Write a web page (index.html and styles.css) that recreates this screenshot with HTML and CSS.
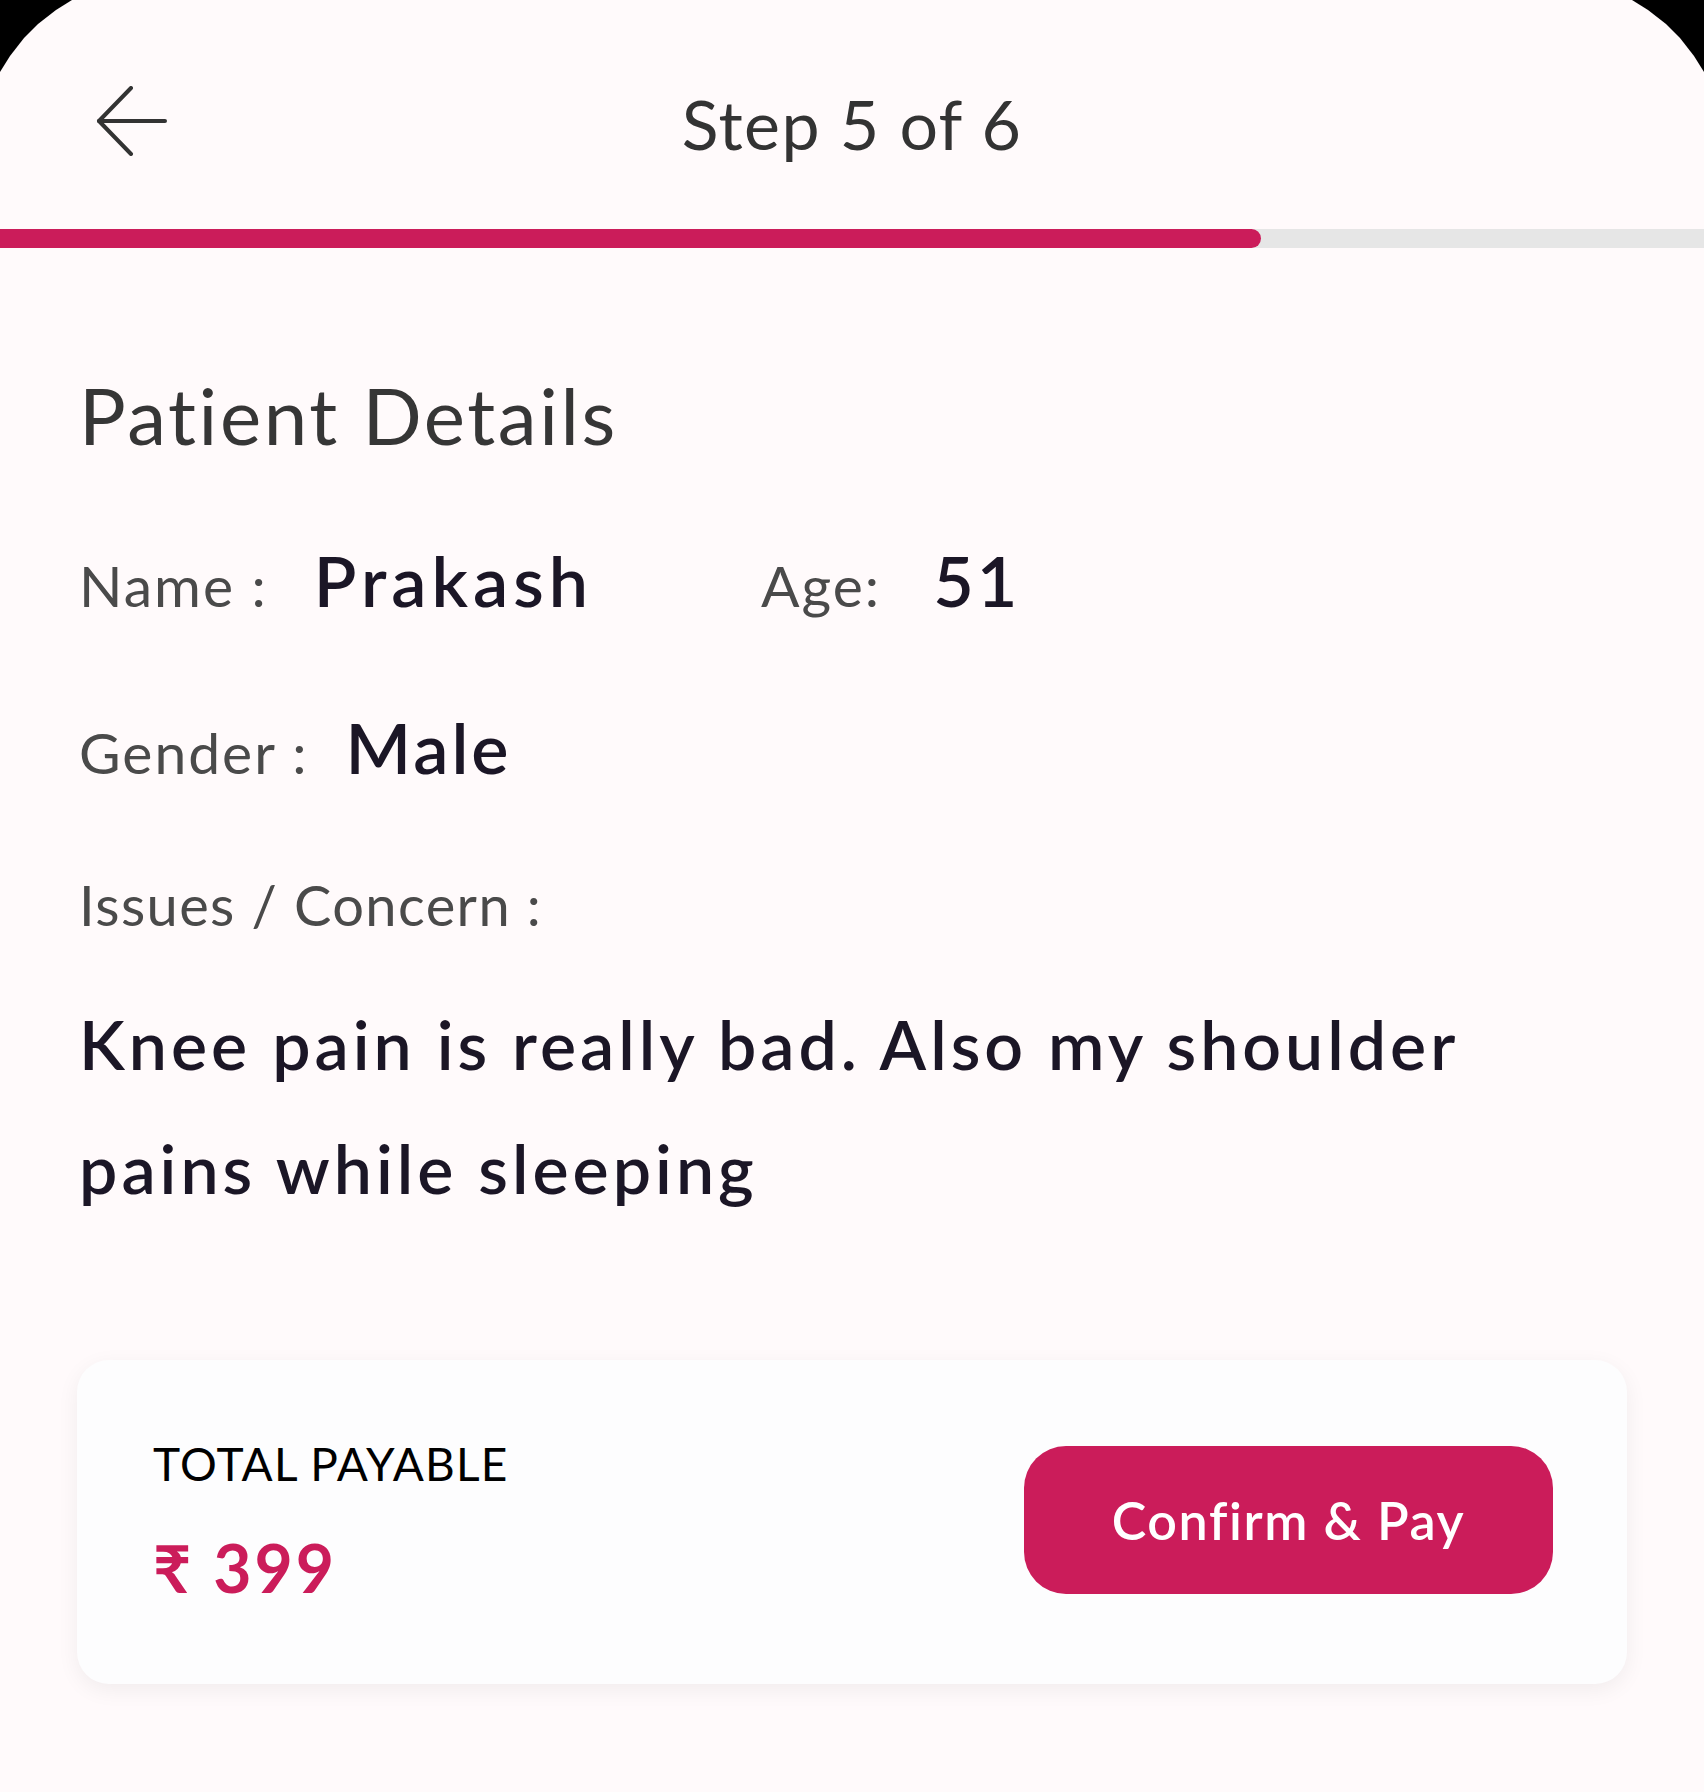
FILE: index.html
```html
<!DOCTYPE html>
<html lang="en">
<head>
<meta charset="utf-8">
<title>Step 5 of 6</title>
<link rel="stylesheet" href="styles.css">
</head>
<body>
<div class="screen">
  <header class="topbar">
    <div class="back">
      <svg width="72" height="70" viewBox="0 0 72 70" fill="none" stroke="#333333" stroke-width="4" stroke-linecap="round" stroke-linejoin="round">
        <path d="M35 2 L3 35 L35 68"/>
        <path d="M3 35 H69"/>
      </svg>
    </div>
    <h1 class="title">Step 5 of 6</h1>
    <div></div>
  </header>
  <div class="progress"><div class="progress-fill"></div></div>

  <main class="content">
    <h2 class="section-title">Patient Details</h2>
    <div class="row">
      <div class="field field-name"><span class="label">Name :</span><span class="value value-wide">Prakash</span></div>
      <div class="field field-age"><span class="label">Age:</span><span class="value">51</span></div>
    </div>
    <div class="row">
      <div class="field field-gender"><span class="label">Gender :</span><span class="value">Male</span></div>
    </div>
    <div class="issues-label">Issues / Concern :</div>
    <p class="issues-text">Knee pain is really bad. Also my shoulder pains while sleeping</p>

    <section class="pay-card">
      <div class="pay-info">
        <div class="pay-label">TOTAL PAYABLE</div>
        <div class="pay-amount">₹ 399</div>
      </div>
      <button class="pay-btn">Confirm &amp; Pay</button>
    </section>
  </main>
</div>
</body>
</html>
```
FILE: styles.css
```css
* { box-sizing: border-box; }
html, body { margin: 0; padding: 0; }
body {
  background: #000000;
  font-family: Lato, "Noto Sans", "DejaVu Sans", sans-serif;
}
.screen {
  background: #fffafb;
  min-height: 1792px;
  clip-path: polygon(0 72px, 10px 56px, 24px 38px, 38px 24px, 56px 10px, 72px 0,
    calc(100% - 72px) 0, calc(100% - 56px) 10px, calc(100% - 38px) 24px, calc(100% - 24px) 38px, calc(100% - 10px) 56px, 100% 72px,
    100% 100%, 0 100%);
}
.topbar {
  height: 229px;
  display: grid;
  grid-template-columns: 1fr auto 1fr;
  align-items: start;
  padding-top: 84px;
}
.back {
  padding-left: 96px;
  padding-top: 2px;
  display: flex;
}
.title {
  margin: 0;
  font-size: 68px;
  line-height: 80px;
  font-weight: 400;
  letter-spacing: 1.4px;
  color: #333333;
}
.progress {
  height: 19px;
  background: #e6e6e6;
}
.progress-fill {
  height: 100%;
  width: 1261px;
  background: #cb1c5a;
  border-radius: 0 10px 10px 0;
}
.content {
  padding: 0 79px;
}
.section-title {
  margin: 122px 0 0;
  font-size: 78px;
  line-height: 90px;
  font-weight: 400;
  letter-spacing: 2.6px;
  color: #363636;
}
.row {
  display: flex;
  align-items: baseline;
  margin-top: 78px;
  line-height: 84px;
}
.row + .row { margin-top: 78px; }
.field {
  display: flex;
  align-items: baseline;
  gap: 46px;
}
.field-name { width: 682px; }
.field-age { gap: 52px; }
.field-gender { gap: 37px; }
.label {
  font-size: 57px;
  letter-spacing: 2px;
  color: #4a4a4a;
}
.value {
  font-size: 70px;
  font-weight: 600;
  letter-spacing: 3px;
  color: #1b1626;
}
.value-wide { letter-spacing: 5px; }
.issues-label {
  margin-top: 76px;
  font-size: 56px;
  line-height: 70px;
  letter-spacing: 1.4px;
  color: #4a4a4a;
}
.issues-text {
  margin: 42px 0 0;
  font-size: 68px;
  line-height: 124px;
  font-weight: 600;
  letter-spacing: 4px;
  color: #1b1626;
}
.pay-card {
  margin: 130px -2px 0;
  height: 324px;
  background: #fdfdfe;
  border-radius: 32px;
  box-shadow: 0 6px 22px rgba(0, 0, 0, 0.06);
  display: flex;
  align-items: flex-start;
  justify-content: space-between;
  padding: 0 74px 0 76px;
}
.pay-info {
  display: flex;
  flex-direction: column;
  padding-top: 79px;
}
.pay-label {
  font-size: 46px;
  line-height: 50px;
  letter-spacing: 1.2px;
  color: #000000;
}
.pay-amount {
  margin-top: 44px;
  font-size: 66px;
  line-height: 70px;
  font-weight: 700;
  letter-spacing: 3px;
  color: #cb1c5a;
}
.pay-btn {
  margin-top: 86px;
  width: 529px;
  height: 148px;
  border: none;
  border-radius: 42px;
  background: #cb1c5a;
  color: #ffffff;
  font-family: Lato, "Noto Sans", sans-serif;
  font-size: 52px;
  font-weight: 600;
  letter-spacing: 1.6px;
  padding: 0;
}
```
